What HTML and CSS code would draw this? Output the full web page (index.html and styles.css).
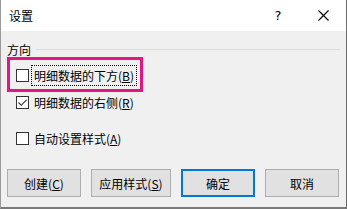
FILE: index.html
```html
<!DOCTYPE html>
<html>
<head>
    <title>设置</title>
    <link rel="stylesheet" href="styles.css">
</head>
<body>
    <div class="window">
        <div class="titlebar">
            <div class="title">设置</div>
            <div class="help">?</div>
            <div class="close">
                <svg width="11" height="11" viewBox="0 0 11 11">
                    <path d="M0.5 0.5 L10.5 10.5 M10.5 0.5 L0.5 10.5" stroke="#000" stroke-width="1.1" fill="none"/>
                </svg>
            </div>
        </div>
        <div class="content">
            <div class="group-head">
                <span>方向</span>
                <div class="rule"></div>
            </div>
            <div class="highlight">
                <div class="row first">
                    <span class="box"></span>
                    <span class="label focus">明细数据的下方(<u>B</u>)</span>
                </div>
            </div>
            <div class="row second">
                <span class="box">
                    <svg width="11" height="11" viewBox="0 0 11 11">
                        <path d="M1.5 5.5 L4.3 8.3 L9.7 2.6" stroke="#333" stroke-width="1.1" fill="none"/>
                    </svg>
                </span>
                <span class="label">明细数据的右侧(<u>R</u>)</span>
            </div>
            <div class="row third">
                <span class="box"></span>
                <span class="label">自动设置样式(<u>A</u>)</span>
            </div>
            <div class="buttons">
                <button class="btn">创建(<u>C</u>)</button>
                <button class="btn wide">应用样式(<u>S</u>)</button>
                <button class="btn default">确定</button>
                <button class="btn">取消</button>
            </div>
        </div>
    </div>
</body>
</html>
```

FILE: styles.css
```css
body {
    margin: 0;
    font-family: "Noto Sans CJK SC", "Noto Sans", sans-serif;
    font-size: 12px;
    color: #000;
    background-color: #f0f0f0;
}
.window {
    width: 347px;
    height: 209px;
    box-sizing: border-box;
    border-left: 1px solid #9a9a9a;
    border-right: 1px solid #6a6a6a;
    border-bottom: 2px solid #7a7a7a;
    background-color: #f0f0f0;
}
.titlebar {
    height: 31px;
    background-color: #fff;
    display: flex;
    align-items: center;
}
.title {
    flex: 1;
    padding-left: 8px;
    font-size: 12px;
}
.help {
    width: 46px;
    text-align: center;
    font-family: "DejaVu Sans", sans-serif;
    font-size: 13px;
    margin-right: -1px;
}
.close {
    width: 46px;
    height: 31px;
    display: flex;
    align-items: center;
    justify-content: center;
}
.content {
    padding: 0 6px;
}
.group-head {
    display: flex;
    align-items: center;
    height: 16px;
    margin-top: 10px;
}
.group-head .rule {
    flex: 1;
    height: 1px;
    background-color: #dcdcdc;
    margin-left: 5px;
}
.highlight {
    width: 136px;
    height: 35px;
    box-sizing: border-box;
    border: 3px solid #e5177f;
    padding: 5px 0 0 6px;
}
.row {
    display: flex;
    align-items: center;
}
.row.first {
    height: 21px;
}
.row.second {
    height: 20px;
    padding-left: 9px;
}
.row.third {
    height: 20px;
    padding-left: 9px;
    margin-top: 16px;
}
.box {
    width: 13px;
    height: 13px;
    box-sizing: border-box;
    border: 1px solid #333;
    background-color: #fff;
    display: flex;
    align-items: center;
    justify-content: center;
}
.label {
    margin-left: 2px;
    padding: 0 2px;
    line-height: 19px;
    border: 1px solid transparent;
}
.label.focus {
    border: 1px dotted #000;
}
.buttons {
    display: flex;
    gap: 10px;
    margin-top: 21px;
}
.btn {
    width: 74px;
    height: 28px;
    padding: 0;
    font-family: "Noto Sans CJK SC", "Noto Sans", sans-serif;
    font-size: 12px;
    color: #000;
    background-color: #e1e1e1;
    border: 1px solid #adadad;
}
.btn.wide {
    width: 80px;
}
.btn.default {
    border: 2px solid #0078d7;
}
```
